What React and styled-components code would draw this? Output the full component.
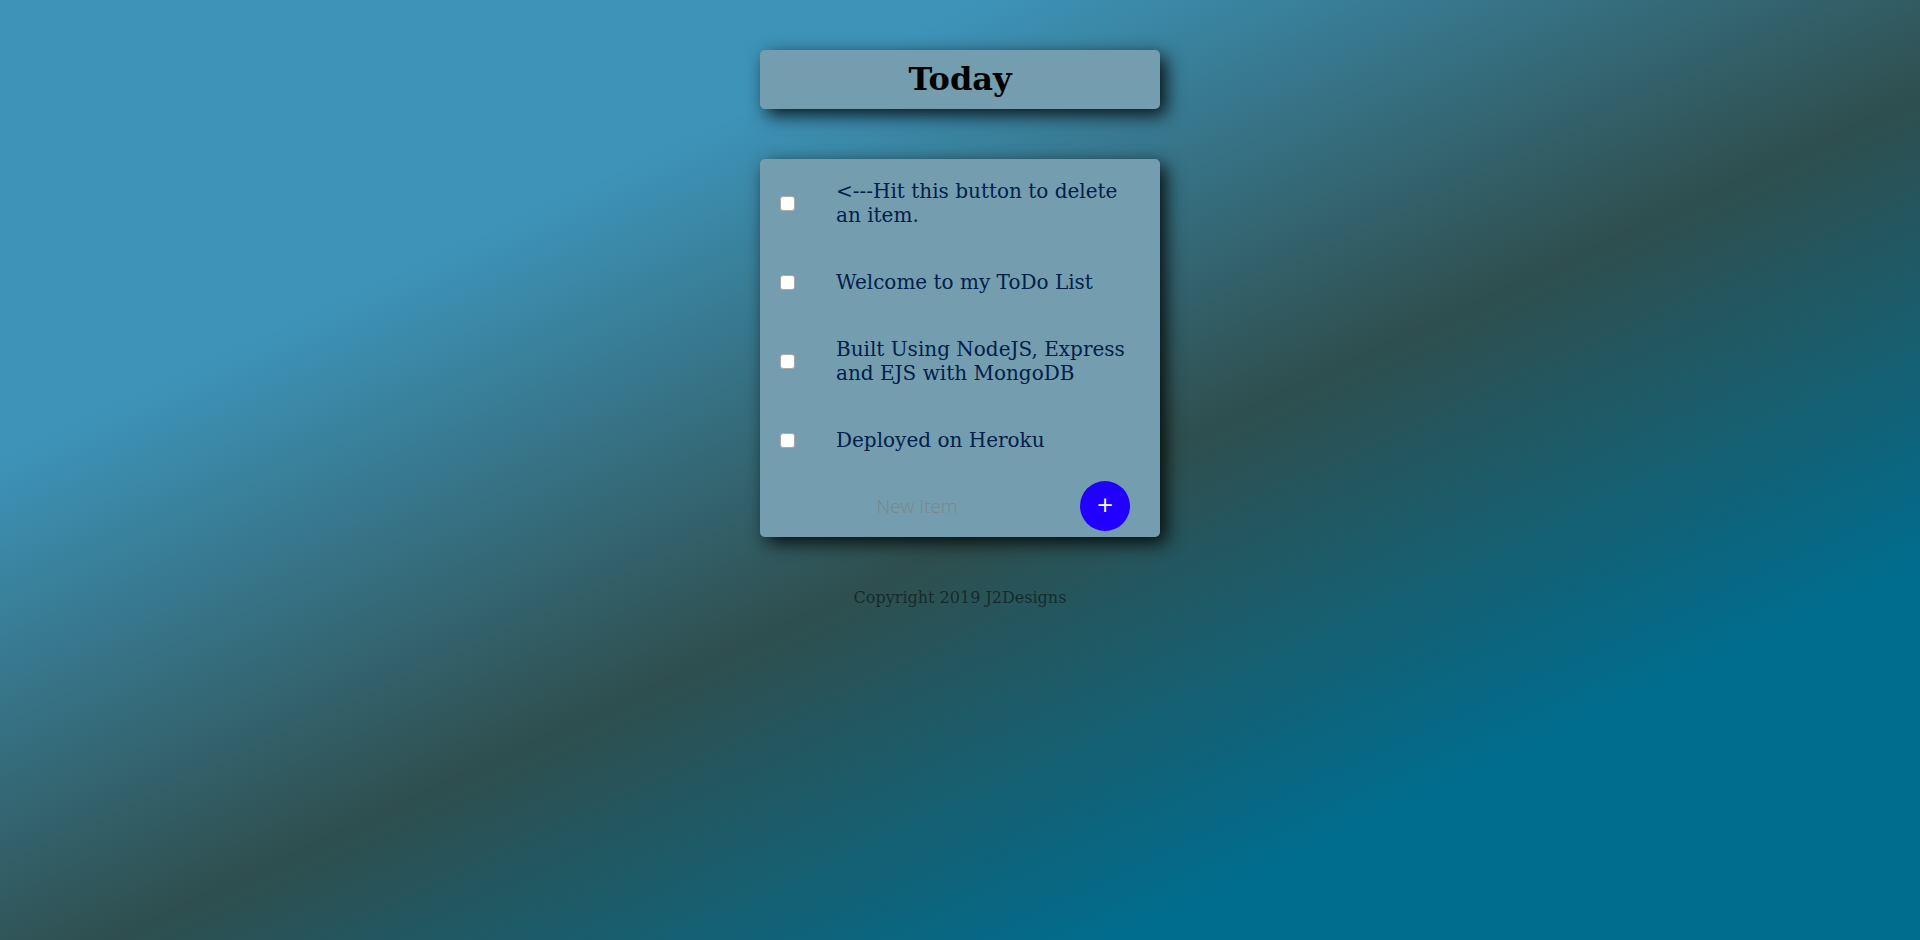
import React from 'react'
import styled, { createGlobalStyle } from 'styled-components'

const items = [
  '<---Hit this button to delete an item.',
  'Welcome to my ToDo List',
  'Built Using NodeJS, Express and EJS with MongoDB',
  'Deployed on Heroku',
]

const GlobalStyle = createGlobalStyle`
html, body {
  margin: 0;
  padding: 0;
}
body {
  min-height: 100vh;
  font-family: "DejaVu Serif", serif;
  line-height: 1.2;
  background: linear-gradient(155deg, #3d93b8 25%, #2f4f4f 54%, #006d8f 80%);
  background-attachment: fixed;
}
`

const Page = styled.div`
  display: flex;
  flex-direction: column;
  align-items: center;
  padding-top: 50px;
`

const Box = styled.div`
  width: 400px;
  margin-bottom: 50px;
  background: #749eaf;
  border-radius: 5px;
  box-shadow: 6px 6px 18px 0 rgba(0, 0, 0, 0.85);
`

const Heading = styled.h1`
  margin: 0;
  padding: 10px;
  text-align: center;
  font-size: 32px;
  line-height: 39px;
  font-weight: bold;
  color: #000;
`

const Item = styled.label`
  min-height: 70px;
  display: flex;
  align-items: center;
`

const Check = styled.input`
  appearance: none;
  margin: 20px 21px 20px 20px;
  width: 15px;
  height: 15px;
  flex-shrink: 0;
  box-sizing: border-box;
  background: #fff;
  border: 1px solid #a9a9a9;
  border-radius: 3px;
  cursor: pointer;
  &:checked {
    background: #2200ff;
    border-color: #2200ff;
  }
`

const Text = styled.p`
  margin: 0;
  padding: 20px;
  font-size: 20px;
  line-height: 24px;
  color: #00204a;
`

const Form = styled.form`
  height: 62px;
  display: flex;
  align-items: center;
  margin-left: 20px;
`

const NewItem = styled.input`
  width: 274px;
  height: 60px;
  margin-right: 26px;
  padding: 0;
  border: none;
  background: transparent;
  text-align: center;
  font-family: "Open Sans", sans-serif;
  font-size: 19px;
  font-weight: 300;
  color: #00204a;
  &::placeholder {
    color: grey;
    opacity: 0.8;
  }
  &:focus {
    outline: none;
  }
`

const AddButton = styled.button`
  width: 50px;
  height: 50px;
  border-radius: 50%;
  border: none;
  background: #2200ff;
  color: #fff;
  font-family: "DejaVu Sans", sans-serif;
  font-size: 21px;
  line-height: 1;
  padding: 0 0 2px;
  display: flex;
  align-items: center;
  justify-content: center;
  cursor: pointer;
`

const Footer = styled.footer`
  text-align: center;
  font-size: 16px;
  line-height: 22px;
  color: rgba(0, 0, 0, 0.5);
`

const App = () => {
  return (
    <>
      <GlobalStyle />
      <Page>
        <Box>
          <Heading>Today</Heading>
        </Box>
        <Box>
          {items.map((item) => (
            <Item key={item}>
              <Check type="checkbox" />
              <Text>{item}</Text>
            </Item>
          ))}
          <Form onSubmit={(e) => e.preventDefault()}>
            <NewItem type="text" placeholder="New Item" autoComplete="off" />
            <AddButton type="submit">+</AddButton>
          </Form>
        </Box>
        <Footer>Copyright 2019 J2Designs</Footer>
      </Page>
    </>
  )
}

export default App
